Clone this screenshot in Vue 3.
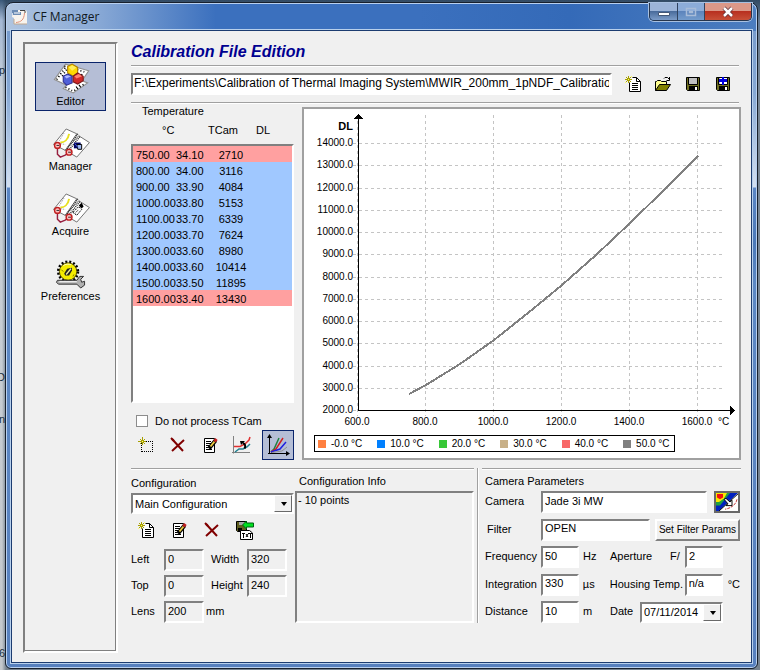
<script setup>
import { ref } from 'vue'

const sections = ['Editor', 'Manager', 'Acquire', 'Preferences']
const active = ref('Editor')
const path = ref('F:\\Experiments\\Calibration of Thermal Imaging System\\MWIR_200mm_1pNDF_Calibration\\Calibration')
const skipTCam = ref(false)

const points = [
  { t: 750, cam: '34.10', dl: 2710, edge: true },
  { t: 800, cam: '34.00', dl: 3116 },
  { t: 900, cam: '33.90', dl: 4084 },
  { t: 1000, cam: '33.80', dl: 5153 },
  { t: 1100, cam: '33.70', dl: 6339 },
  { t: 1200, cam: '33.70', dl: 7624 },
  { t: 1300, cam: '33.60', dl: 8980 },
  { t: 1400, cam: '33.60', dl: 10414 },
  { t: 1500, cam: '33.50', dl: 11895 },
  { t: 1600, cam: '33.40', dl: 13430, edge: true },
]

const px = (t) => 54 + ((t - 600) / 200) * 68
const py = (dl) => Math.round(301 - ((dl - 2000) / 12000) * 267)
const yTicks = Array.from({ length: 13 }, (_, i) => 2000 + i * 1000)
const xTicks = [600, 800, 1000, 1200, 1400, 1600]
const curve = points.map((p) => `${px(p.t)},${py(p.dl)}`).join(' ')

const legend = [
  { label: '-0.0 °C', color: '#ff8040' },
  { label: '10.0 °C', color: '#0080ff' },
  { label: '20.0 °C', color: '#38c838' },
  { label: '30.0 °C', color: '#c8b088' },
  { label: '40.0 °C', color: '#f86868' },
  { label: '50.0 °C', color: '#808080' },
]
</script>

<template>
  <svg class="defs" aria-hidden="true">
    <symbol id="i-new" viewBox="0 0 16 16">
      <path d="M4.5 6.5V15.5H15.5V5.5L11.5 1.5H7.5" fill="#fff" stroke="#000" />
      <path d="M11.5 1.5V5.5H15.5M7 7.5H13M7 9.5H13M7 11.5H13M7 13.5H13" fill="none" stroke="#000" />
      <path d="M3.5 0V7M0 3.5H7M1 1L6 6M6 1L1 6" stroke="#a8a000" />
      <path d="M3 3h1v1H3zM6 0h1v1H6zM0 6h1v1H0z" fill="#ffff60" />
    </symbol>
    <symbol id="i-open" viewBox="0 0 16 16">
      <path d="M.5 14.5V5.5H1.5L2.5 4.5H5.5L6.5 5.5H11.5V8.5" fill="#ffff90" stroke="#000" />
      <path d="M.5 14.5L4.5 8.5H15.5L11.5 14.5Z" fill="#808000" stroke="#000" />
      <path d="M9 2.5L10 1.5H12.5L14.5 3.5M14.5 1V4.5H11.5" fill="none" stroke="#000" />
    </symbol>
    <symbol id="i-save" viewBox="0 0 16 16">
      <path d="M1.5 1.5H14.5V14.5H2.5L1.5 13.5Z" fill="#707020" stroke="#000" />
      <path d="M4 2H12V8H4Z" fill="#c0c0c0" />
      <path d="M3.5 2V8.5H12.5V2" fill="none" stroke="#000" />
      <path d="M4 10H13V14H4Z" fill="#000" />
      <path d="M10 11h2v3h-2z" fill="#fff" />
    </symbol>
    <symbol id="i-saveas" viewBox="0 0 16 16">
      <use href="#i-save" />
      <path d="M5 2H12V8H5Z" fill="#fff" />
      <path d="M7 1h2v2h3v3H9v3H7V6H4V3h3z" fill="#0000e0" />
    </symbol>
    <symbol id="i-point" viewBox="0 0 16 16">
      <path d="M4 4.5H15M14.5 4V15M15 14.5H3M3.5 15V5" stroke="#000" stroke-dasharray="1 1" fill="none" />
      <path d="M4.5 0V8M0 4.5H8M2 2L7 7M7 2L2 7" stroke="#a8a000" />
      <path d="M4 4h1v1H4z" fill="#ffff80" />
    </symbol>
    <symbol id="i-delete" viewBox="0 0 16 16">
      <path d="M2 2L13 14M14 3L2 14" stroke="#800000" stroke-width="2" fill="none" />
      <path d="M1 1L4 4" stroke="#800000" stroke-width="2" />
    </symbol>
    <symbol id="i-edit" viewBox="0 0 16 16">
      <path d="M2.5 1.5H12.5V15.5H2.5Z" fill="#fff" stroke="#000" />
      <path d="M4 4.5H9M4 6.5H9M4 8.5H7M4 10.5H6M4 12.5H10" stroke="#000" />
      <path d="M7 11.5L13.5 3.5" stroke="#000" stroke-width="4" />
      <path d="M8.5 9.5L12.5 4.5" stroke="#e8c840" stroke-width="2" />
      <path d="M12.5 4.5L14.5 2" stroke="#c02020" stroke-width="3" />
    </symbol>
    <symbol id="i-fit" viewBox="0 0 20 20">
      <path d="M2.5 1V18.5M1 17.5H19" stroke="#808080" fill="none" />
      <path d="M3 11.5H9L14 9L18 5L19 2" stroke="#e03030" fill="none" stroke-width="1.5" />
      <path d="M4 17L8 14H12L16 12L19 9" stroke="#208090" fill="none" stroke-width="1.5" />
      <path d="M13.5 13.5C15 11 14 9 12 8" stroke="#000" stroke-width="2" fill="none" />
      <path d="M9 6H14L10 10Z" fill="#000" />
    </symbol>
    <symbol id="i-curves" viewBox="0 0 24 24">
      <path d="M3.5 3V20.5M2 20.5H22" stroke="#000" fill="none" />
      <path d="M1 5L3.5 1L6 5ZM20 18L24 20.5L20 23Z" fill="#000" />
      <path d="M5 19L8 16L13 5" stroke="#208040" fill="none" stroke-width="1.5" />
      <path d="M5 19L10 16L17 5" stroke="#d02020" fill="none" stroke-width="1.5" />
      <path d="M5 19L14 16L20 9" stroke="#2020e0" fill="none" stroke-width="1.5" />
      <path d="M6 19.5L16 18L21 14" stroke="#909090" fill="none" />
    </symbol>
    <symbol id="i-export" viewBox="0 0 20 20">
      <path d="M1.5 1.5H11.5V11.5H2.5L1.5 10.5Z" fill="#606020" stroke="#000" />
      <path d="M4 2H10V5H4Z" fill="#a8a8a8" />
      <path d="M3 8H7V11H3Z" fill="#000" />
      <path d="M7.5 5L11.5 1V3H18.5V7H11.5V9Z" fill="#00e020" stroke="#006010" />
      <path d="M5.5 10.5H14.5L17.5 13V19.5H5.5Z" fill="#fff" stroke="#000" />
      <path d="M7 13.5H10M8.5 13V18M11 14L13 17M13 14L11 17M13 13.5H17M15.5 13V18" stroke="#000" fill="none" />
    </symbol>
    <symbol id="i-Editor" viewBox="0 0 32 28">
      <path d="M11 1L32 7L26 16L31 18L18 27L9 23L12 20L1 15Z" fill="#fff" stroke="#909090" />
      <path d="M10 3L28 8M3 15L11 4M11 22L17 25M19 25L28 19M26 10L23 15M12 6L8 12M24 20L19 23" stroke="#000" stroke-width="1.5" stroke-dasharray="1 2" fill="none" />
      <path d="M13 3L17 1L22 4V9L18 12L13 9Z" fill="#ffd800" stroke="#b08000" />
      <path d="M14 4L17 2L21 4L17 7Z" fill="#ffee60" />
      <path d="M9 12L13 10L17 12V18L12 20L9 17Z" fill="#5060d8" stroke="#303090" />
      <path d="M10 12L13 11L16 12L12 14Z" fill="#b0b8ff" />
      <path d="M18 12L22 9L27 12V16L22 19L18 17Z" fill="#d02828" stroke="#801818" />
      <path d="M19 12L23 10L26 12L21 14Z" fill="#ff8070" />
    </symbol>
    <symbol id="i-book" viewBox="0 0 40 32">
      <path d="M15 1L26 6L14 23L2 17Z" fill="#fff" stroke="#707070" />
      <path d="M28 8L39 15L26 30L14 23Z" fill="#fff" stroke="#707070" />
      <path d="M27 6L15 23M29 9L17 24" stroke="#202020" stroke-width="1.5" stroke-dasharray="1 1" />
      <path d="M9 15C13 15 17 12 18 6" stroke="#e8e020" stroke-width="2" fill="none" />
      <path d="M8 13L13 5M8 16L14 17" stroke="#909090" stroke-dasharray="1 1" />
      <path d="M6 19V27L9 30L14 28L17 26" stroke="#982040" stroke-width="1.5" fill="none" />
      <circle cx="6" cy="18" r="3" fill="#ffc0c0" stroke="#c02020" stroke-width="1.5" />
      <circle cx="18" cy="25" r="3" fill="#ffc0c0" stroke="#c02020" stroke-width="1.5" />
      <path d="M5 18H8M17 25H20" stroke="#303030" />
    </symbol>
    <symbol id="i-Manager" viewBox="0 0 40 32">
      <use href="#i-book" />
      <path d="M23 15H30V21H23Z" fill="#000060" />
      <path d="M26 17H31V22H27Z" fill="#a0b8f0" stroke="#000" />
      <path d="M24 16L27 20" stroke="#4060e0" />
    </symbol>
    <symbol id="i-Acquire" viewBox="0 0 40 32">
      <use href="#i-book" />
      <path d="M22 20L28 14L31 17L26 23Z" fill="#fff" stroke="#000" stroke-dasharray="2 1" />
      <path d="M28 13L31 10L33 14L31 16Z" fill="#000" />
      <path d="M24 21L28 17" stroke="#000" stroke-dasharray="1 1" />
    </symbol>
    <symbol id="i-Preferences" viewBox="0 0 32 32">
      <circle cx="13" cy="14" r="10" fill="none" stroke="#000" stroke-width="3" stroke-dasharray="2 2" />
      <circle cx="13" cy="14" r="9" fill="#f4ec00" stroke="#504800" />
      <path d="M9 16L12 11L17 10V13L14 18L10 18Z" fill="#202020" />
      <path d="M11 17L16 11" stroke="#f0f0a0" stroke-width="1.5" />
      <path d="M6 12L8 14M18 19L19 17" stroke="#807800" />
      <path d="M8 8C10 6 14 6 16 7" stroke="#ffffc0" fill="none" />
      <path d="M2 23H22L25 19H29L26 22L27 25L30 24V28L26 31L22 27H3L1 25Z" fill="#b0b0b0" stroke="#303030" />
      <path d="M4 24.5H22" stroke="#fff" />
    </symbol>
  </svg>

  <div class="desktop">
    <div class="behind" aria-hidden="true">
      <span class="b1">p</span>
      <span class="b2">D</span>
      <span class="b3">n</span>
      <span class="b4">6</span>
    </div>
    <div class="window">
      <header class="titlebar">
        <svg class="app-icon" viewBox="0 0 16 16" aria-hidden="true">
          <path d="M1 1H14L15 3V15H2V9L0 8Z" fill="#f8f4ee" />
          <path d="M0 1H6V3H9V6H1V4H0Z" fill="#6c8cb4" />
          <path d="M2 4H8" stroke="#fff" />
          <path d="M8 1.5H13V4" fill="none" stroke="#444" />
          <path d="M4 13.500C9 13 12 11 12.500 4" fill="none" stroke="#e09078" />
          <path d="M2 10V15H15" fill="none" stroke="#c0a890" />
        </svg>
        <h1>CF Manager</h1>
        <div class="controls">
          <button type="button" aria-label="Minimize"><svg viewBox="0 0 14 12"><path d="M1.5 6.5H12.5V9.5H1.5Z" fill="#fff" stroke="#445878" /></svg></button>
          <button type="button" class="max" aria-label="Maximize" disabled><svg viewBox="0 0 14 12"><path d="M2.5 2.5H11.5V9.5H2.5ZM5.5 5.5H8.5V6.5H5.5Z" fill="none" stroke="#a8bcd8" stroke-width="1.5" /></svg></button>
          <button type="button" class="close" aria-label="Close"><svg viewBox="0 0 14 12"><path d="M3 2L11 10M11 2L3 10" stroke="#603038" stroke-width="4" /><path d="M3 2L11 10M11 2L3 10" stroke="#fff" stroke-width="2.5" /></svg></button>
        </div>
      </header>

      <div class="client">
        <nav class="sidebar">
          <button v-for="s in sections" :key="s" type="button" class="nav" :class="{ on: active === s }" @click="active = s">
            <svg aria-hidden="true"><use :href="'#i-' + s" /></svg>
            <span>{{ s }}</span>
          </button>
        </nav>

        <main>
          <h2>Calibration File Edition</h2>
          <div class="rule"></div>
          <div class="file">
            <input v-model="path" class="field path" type="text" aria-label="Calibration file" />
            <div class="file-tools">
              <button type="button" class="tool" aria-label="New"><svg><use href="#i-new" /></svg></button>
              <button type="button" class="tool" aria-label="Open"><svg><use href="#i-open" /></svg></button>
              <button type="button" class="tool" aria-label="Save"><svg><use href="#i-save" /></svg></button>
              <button type="button" class="tool" aria-label="Save as"><svg><use href="#i-saveas" /></svg></button>
            </div>
          </div>
          <div class="rule"></div>

          <div class="upper">
            <section class="points">
              <h3 id="temp">Temperature</h3>
              <div class="heads"><span>°C</span><span>TCam</span><span>DL</span></div>
              <div class="list">
                <table aria-labelledby="temp">
                  <tbody>
                    <tr v-for="p in points" :key="p.t" :class="{ edge: p.edge }">
                      <td class="c-t">{{ p.t.toFixed(2) }}</td>
                      <td class="c-cam">{{ p.cam }}</td>
                      <td class="c-dl">{{ p.dl }}</td>
                    </tr>
                  </tbody>
                </table>
              </div>
              <label class="check"><input v-model="skipTCam" type="checkbox" />Do not process TCam</label>
              <div class="point-tools">
                <button type="button" class="tool" aria-label="Add point"><svg><use href="#i-point" /></svg></button>
                <button type="button" class="tool" aria-label="Delete point"><svg><use href="#i-delete" /></svg></button>
                <button type="button" class="tool" aria-label="Edit point"><svg><use href="#i-edit" /></svg></button>
                <button type="button" class="tool mid" aria-label="Fit"><svg><use href="#i-fit" /></svg></button>
                <button type="button" class="tool big on" aria-label="Show curves"><svg><use href="#i-curves" /></svg></button>
              </div>
            </section>

            <section class="chart">
              <svg viewBox="0 0 435 326" role="img" aria-label="DL against temperature">
                <g class="grid">
                  <line v-for="y in yTicks" :key="y" x1="49" x2="420" :y1="py(y) + 0.5" :y2="py(y) + 0.5" />
                  <line v-for="x in xTicks" :key="x" :x1="px(x) - 0.5" :x2="px(x) - 0.5" y1="6" y2="307" />
                </g>
                <path class="axis" d="M54.5 8V301.5H430" />
                <path d="M50 10L54.5 5L59 10ZM426 296L431 301.5L426 307Z" />
                <polyline class="curve" :points="curve" />
                <text class="bold" x="49" y="21" text-anchor="end">DL</text>
                <text v-for="y in yTicks" :key="'y' + y" x="49" :y="py(y) + 3" text-anchor="end">{{ y.toFixed(1) }}</text>
                <text v-for="x in xTicks" :key="'x' + x" :x="px(x) - 1" y="316" text-anchor="middle">{{ x.toFixed(1) }}</text>
                <text x="414" y="316">°C</text>
              </svg>
              <ul class="legend">
                <li v-for="l in legend" :key="l.label"><i :style="{ background: l.color }"></i>{{ l.label }}</li>
              </ul>
            </section>
          </div>

          <div class="lower">
            <div class="left">
              <section class="config">
                <label for="cfg" class="cap">Configuration</label>
                <span class="drop">
                  <select id="cfg"><option>Main Configuration</option></select>
                </span>
                <div class="config-tools">
                  <button type="button" class="tool" aria-label="New configuration"><svg><use href="#i-new" /></svg></button>
                  <button type="button" class="tool" aria-label="Edit configuration"><svg><use href="#i-edit" /></svg></button>
                  <button type="button" class="tool" aria-label="Delete configuration"><svg><use href="#i-delete" /></svg></button>
                  <button type="button" class="tool mid" aria-label="Export as text"><svg><use href="#i-export" /></svg></button>
                </div>
                <div class="dims">
                  <label for="left">Left</label><input id="left" class="field" value="0" readonly />
                  <label for="width">Width</label><input id="width" class="field" value="320" readonly />
                  <label for="top">Top</label><input id="top" class="field" value="0" readonly />
                  <label for="height">Height</label><input id="height" class="field" value="240" readonly />
                  <label for="lens">Lens</label><input id="lens" class="field" value="200" readonly />
                  <span class="unit">mm</span>
                </div>
              </section>
              <section class="info">
                <h3>Configuration Info</h3>
                <div class="info-box">- 10 points</div>
              </section>
            </div>
            <div class="vrule"></div>
            <section class="camera">
              <h3>Camera Parameters</h3>
              <div class="rows">
                <div class="row">
                  <label for="cam" class="l">Camera</label><input id="cam" class="field grow" value="Jade 3i MW" />
                  <button type="button" class="palette" aria-label="Camera palette">
                    <svg viewBox="0 0 22 20" preserveAspectRatio="none" aria-hidden="true">
                      <rect width="22" height="20" fill="#fff" />
                      <path d="M0 0H22L3 20H0Z" fill="#0020c0" />
                      <path d="M0 0H14L9 7L4 14H0Z" fill="#20a040" />
                      <path d="M0 0H11L8 6L3 10H0Z" fill="#f8e800" />
                      <path d="M1 1H7V5L4 7L1 5Z" fill="#f01010" />
                      <path d="M3 20L22 1" stroke="#000" fill="none" />
                      <path d="M21 7C20 13 15 17 9 18" stroke="#c03030" fill="none" stroke-dasharray="3 1" />
                      <path d="M8 7L10 6L14 10L16 8V14H10L12 12Z" fill="#fff" stroke="#000" />
                    </svg>
                  </button>
                </div>
                <div class="row">
                  <label for="filter" class="l in">Filter</label><input id="filter" class="field grow" value="OPEN" />
                  <button type="button" class="push">Set Filter Params</button>
                </div>
                <div class="row">
                  <label for="freq" class="l">Frequency</label><input id="freq" class="field num" value="50" />
                  <span class="u">Hz</span>
                  <label for="ap" class="m">Aperture</label><span class="pre">F/</span><input id="ap" class="field num" value="2" />
                </div>
                <div class="row">
                  <label for="int" class="l">Integration</label><input id="int" class="field num" value="330" />
                  <span class="u">µs</span>
                  <label for="ht" class="m wide">Housing Temp.</label><input id="ht" class="field num" value="n/a" />
                  <span class="deg">°C</span>
                </div>
                <div class="row">
                  <label for="dist" class="l">Distance</label><input id="dist" class="field num" value="10" />
                  <span class="u">m</span>
                  <label for="date" class="m date">Date</label>
                  <span class="drop date-drop"><select id="date"><option>07/11/2014</option></select></span>
                </div>
              </div>
            </section>
          </div>
        </main>
      </div>
    </div>
  </div>
</template>

<style>
body {
  margin: 0;
}
</style>

<style scoped>
* {
  box-sizing: border-box;
}
.defs {
  position: absolute;
  width: 0;
  height: 0;
}
.desktop {
  position: relative;
  min-height: 100vh;
  display: flex;
  padding: 2px 2px 1px 5px;
  background: linear-gradient(90deg, rgb(0 0 0 / 0) 0 2px, rgb(40 60 80 / 50%) 6px), linear-gradient(#3a5878 0, #a4b8d4 20px, #c8d0d8 90px, #c4c8cc 100%);
  font: 11px/14px "Liberation Sans", sans-serif;
  color: #000;
}
.behind {
  position: absolute;
  inset: 0 auto 0 0;
  width: 5px;
  overflow: hidden;
}
.behind span {
  position: absolute;
  right: 0;
  color: #203040;
}
.behind .b1 {
  top: 63px;
}
.behind .b2 {
  top: 370px;
}
.behind .b3 {
  top: 412px;
}
.behind .b4 {
  top: 646px;
}
.window {
  position: relative;
  flex: 1;
  min-width: 0;
  display: flex;
  flex-direction: column;
  padding: 0 5px 5px;
  border: 1px solid #18202c;
  border-radius: 8px 8px 6px 6px;
  box-shadow: inset 0 0 0 1px #b8d0f0;
  background:
    linear-gradient(90deg, rgb(205 218 232 / 80%) 0, rgb(190 208 230 / 60%) 90px, rgb(70 120 195 / 0%) 210px) 0 0 / 100% 28px no-repeat,
    linear-gradient(90deg, #3b70be 0 55%, #346ab8 75%, #4c7dbf 100%) 0 0 / 100% 28px no-repeat,
    linear-gradient(#7095c8 0, #86a8d4 90px, #d4e0f0 184px, #5b86c4 185px, #4b79b8 240px, #5c88c4 280px, #5780be 100%);
}
.titlebar {
  height: 27px;
  flex: none;
  display: flex;
  align-items: center;
  padding-left: 1px;
}
.app-icon {
  width: 16px;
  height: 16px;
  margin-right: 5px;
}
h1 {
  margin: 0;
  flex: 1;
  font: 12px/16px "Open Sans", sans-serif;
  color: #101820;
}
.controls {
  align-self: flex-start;
  display: flex;
  height: 18px;
  border: 1px solid #26354d;
  border-top: 0;
  border-radius: 0 0 5px 5px;
  box-shadow: 0 0 0 1px #a8c0e0;
  overflow: hidden;
}
.controls button {
  width: 28px;
  padding: 0;
  border: 0;
  border-right: 1px solid #30425e;
  display: grid;
  place-items: center;
  background: linear-gradient(#9cb4d8 0 45%, #4a6c9c 50%, #7c9cc8);
}
.controls .max {
  width: 27px;
  background: linear-gradient(#8cacd8 0 45%, #5c84bc 50%, #749ccc);
}
.controls .close {
  width: 46px;
  border-right: 0;
  background: linear-gradient(#dc9888 0 45%, #b83020 50%, #c85038);
}
.controls svg {
  width: 14px;
  height: 12px;
}
.client {
  flex: 1;
  min-width: 0;
  display: flex;
  gap: 13px;
  padding: 11px 10px 9px 11px;
  background: #f0f0f0;
  border: 1px solid #1c3c70;
  box-shadow: 0 0 0 1px #b8d0ec;
}
.sidebar {
  flex: 0 0 95px;
  display: flex;
  flex-direction: column;
  align-items: center;
  gap: 16px;
  padding-top: 18px;
  border: 2px solid;
  border-color: #808080 #fff #fff #808080;
  box-shadow: inset -1px -1px #808080;
}
.nav {
  width: 71px;
  height: 49px;
  display: flex;
  flex-direction: column;
  align-items: center;
  padding: 0;
  border: 1px solid transparent;
  background: none;
  font: inherit;
  color: inherit;
}
.nav.on,
.tool.on {
  background: #b5bed6;
  border-color: #0a246a;
}
.nav svg {
  width: 40px;
  height: 31px;
  flex: none;
}
main {
  flex: 1;
  min-width: 0;
  display: flex;
  flex-direction: column;
}
h2 {
  margin: 0;
  height: 23px;
  font: italic bold 16px/19px "Liberation Sans", sans-serif;
  color: #000090;
}
h3 {
  margin: 0;
  font: inherit;
}
.rule {
  height: 2px;
  margin-right: 2px;
  background: #fff;
  border-top: 1px solid #a0a0a0;
  flex: none;
}
.file {
  display: flex;
  align-items: center;
  gap: 10px;
  padding: 6px 7px 7px 0;
}
.field {
  min-width: 0;
  height: 22px;
  padding: 0 2px 3px;
  border: 2px solid;
  border-color: #808080 #fff #fff #808080;
  border-radius: 0;
  background: #fff;
  font: inherit;
  color: inherit;
  outline: 0;
}
.field[readonly] {
  background: #f0f0f0;
}
.path {
  flex: 1;
  font-size: 12px;
  padding: 0 1px 2px;
}
.file-tools {
  display: flex;
  gap: 8px;
}
.tool {
  width: 22px;
  height: 22px;
  padding: 0;
  border: 1px solid transparent;
  background: none;
  display: grid;
  place-items: center;
}
.tool svg {
  width: 16px;
  height: 16px;
}
.mid svg {
  width: 20px;
  height: 20px;
}
.big {
  width: 32px;
  height: 30px;
}
.big svg {
  width: 24px;
  height: 24px;
}
.upper {
  display: flex;
  gap: 8px;
  padding: 3px 0 8px;
}
.points {
  flex: 0 0 163px;
}
.points h3 {
  padding-left: 11px;
  line-height: 9px;
}
.heads {
  display: flex;
  padding: 7px 0 7px 31px;
}
.heads span:nth-child(1) {
  width: 46px;
}
.heads span:nth-child(2) {
  width: 48px;
}
.list {
  height: 259px;
  border: 2px solid;
  border-color: #808080 #fff #fff #808080;
  background: #fff;
}
table {
  width: 100%;
  border-collapse: collapse;
  table-layout: fixed;
}
tr {
  height: 16px;
  background: #a0c8ff;
}
tr.edge {
  background: #ffa0a0;
}
td {
  padding: 2px 0 0;
  line-height: 14px;
}
.c-t {
  width: 43px;
  padding-left: 3px;
}
.c-cam {
  width: 35px;
}
.c-dl {
  text-align: center;
  padding-right: 41px;
}
.check {
  display: flex;
  align-items: center;
  gap: 7px;
  height: 15px;
  margin: 10px 0 2px 5px;
}
.check input {
  appearance: none;
  width: 12px;
  height: 12px;
  margin: 0;
  background: #fff;
  border: 1px solid #8c8c8c;
}
.check input:checked {
  background: #404040;
}
.point-tools {
  display: flex;
  align-items: center;
  justify-content: space-between;
  padding-left: 4px;
}
.chart {
  flex: 1;
  min-width: 0;
  display: flex;
  flex-direction: column;
  align-items: flex-start;
  background: #fff;
  border: 2px solid #a0a0a0;
}
.chart svg {
  width: 100%;
  display: block;
  shape-rendering: crispEdges;
}
.chart text {
  font-size: 10px;
}
.chart .bold {
  font-size: 11px;
  font-weight: bold;
}
.grid line {
  stroke: #c4c4c4;
  stroke-dasharray: 3 3;
}
.axis {
  fill: none;
  stroke: #000;
}
.curve {
  fill: none;
  stroke: #808080;
  stroke-width: 2;
}
.legend {
  display: flex;
  gap: 15px;
  margin: 0 0 0 10px;
  padding: 0 4px 0 3px;
  list-style: none;
  border: 1px solid #000;
  font-size: 10px;
  line-height: 15px;
}
.legend li {
  display: flex;
  align-items: center;
  gap: 5px;
}
.legend i {
  width: 8px;
  height: 8px;
}
.lower {
  display: flex;
  gap: 3px;
}
.left {
  flex: 1;
  min-width: 0;
  display: flex;
  gap: 1px;
  border-top: 1px solid #a0a0a0;
  box-shadow: inset 0 1px #fff;
}
.config {
  flex: 0 0 163px;
  display: flex;
  flex-direction: column;
  padding-top: 7px;
}
.cap {
  margin-bottom: 3px;
}
.drop {
  position: relative;
  display: flex;
  height: 21px;
  border: 2px solid;
  border-color: #808080 #fff #fff #808080;
}
.drop select {
  appearance: none;
  flex: 1;
  width: 100%;
  padding: 0 16px 0 2px;
  border: 0;
  border-radius: 0;
  background: #fff;
  font: inherit;
  color: inherit;
}
.drop::before {
  content: "";
  position: absolute;
  right: 0;
  top: 0;
  bottom: 0;
  width: 16px;
  background: #f0f0f0;
  border: 1px solid;
  border-color: #fff #696969 #696969 #fff;
  pointer-events: none;
}
.drop::after {
  content: "";
  position: absolute;
  right: 5px;
  top: 7px;
  border: 3px solid transparent;
  border-top: 4px solid #000;
  border-bottom: 0;
  pointer-events: none;
}
.config-tools {
  display: flex;
  gap: 11px;
  padding: 5px 0 8px 4px;
}
.dims {
  display: grid;
  grid-template-columns: 33px 40px 43px 40px;
  row-gap: 4px;
  align-items: center;
}
.dims label,
.dims .unit,
.row label,
.row span:not(.drop) {
  padding-bottom: 2px;
}
.dims label:nth-of-type(even) {
  padding-left: 7px;
}
.dims .unit {
  padding-left: 2px;
}
.info {
  flex: 1;
  min-width: 0;
  display: flex;
  flex-direction: column;
  padding-top: 5px;
}
.info h3 {
  padding-left: 4px;
  margin-bottom: 3px;
}
.info-box {
  flex: 1;
  padding: 0 1px;
  border: 2px solid;
  border-color: #808080 #fff #fff #808080;
}
.vrule {
  width: 2px;
  background: #fff;
  border-left: 1px solid #a0a0a0;
}
.camera {
  flex: 0 1 259px;
  min-width: 0;
  display: flex;
  flex-direction: column;
  padding: 5px 1px 0 3px;
  border-top: 1px solid #a0a0a0;
  box-shadow: inset 0 1px #fff;
}
.camera h3 {
  margin-bottom: 3px;
}
.rows {
  flex: 1;
  display: flex;
  flex-direction: column;
  justify-content: space-between;
}
.row {
  display: flex;
  align-items: center;
}
.l {
  width: 56px;
}
.in {
  padding-left: 2px;
}
.grow {
  flex: 1;
}
.num {
  width: 38px;
}
.u {
  width: 31px;
  padding-left: 4px;
}
.m {
  width: 60px;
}
.wide {
  width: 75px;
}
.pre {
  width: 15px;
}
.deg {
  padding-left: 5px;
}
.date {
  width: 30px;
}
.date-drop {
  width: 83px;
}
.palette {
  width: 26px;
  height: 22px;
  margin-left: 7px;
  padding: 0;
  border: 2px solid #686868;
  background: #000;
}
.palette svg {
  display: block;
  width: 100%;
  height: 100%;
}
.push {
  width: 85px;
  height: 22px;
  margin-left: 5px;
  padding: 0;
  border: 2px solid;
  border-color: #fff #808080 #808080 #fff;
  background: #f0f0f0;
  font: inherit;
  font-size: 10px;
  color: inherit;
  white-space: nowrap;
}
</style>
